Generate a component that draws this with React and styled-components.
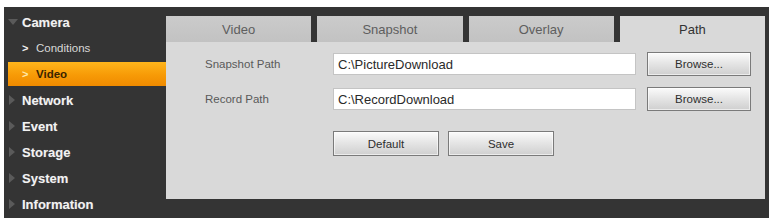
import React from "react";
import styled, { createGlobalStyle } from "styled-components";

const Global = createGlobalStyle`
  html, body { margin: 0; padding: 0; background: #fff; }
  body { font-family: "Liberation Sans", Arial, sans-serif; }
`;

// outer dark frame
const Frame = styled.div`
  margin: 7px 4px 0 4px;
  height: 211px;
  background: #343434;
  display: flex;
  overflow: hidden;
`;

// left menu
const Sidebar = styled.nav`
  width: 162px;
  padding-top: 2px;
  display: flex;
  flex-direction: column;
`;

const MenuItem = styled.div`
  height: 26px;
  display: flex;
  align-items: center;
  padding-left: 4px;
  color: #f2f2f2;
  font-weight: bold;
  font-size: 13px;
  text-shadow: 0 0 1px rgba(255, 255, 255, 0.3);
`;

const Arrow = styled.span`
  width: 0;
  height: 0;
  ${(p) =>
    p.$open
      ? `border-left: 5px solid transparent; border-right: 5px solid transparent; border-top: 6px solid #5a5a5a; margin-right: 4px;`
      : `border-top: 5px solid transparent; border-bottom: 5px solid transparent; border-left: 6px solid #5a5a5a; margin-left: 1px; margin-right: 7px;`}
`;

const SubItem = styled.div`
  height: ${(p) => (p.$active ? "24px" : "26px")};
  margin: ${(p) => (p.$active ? "1px 0" : "0")};
  margin-left: 4px;
  display: flex;
  align-items: center;
  padding-left: 14px;
  font-size: 11.5px;
  color: ${(p) => (p.$active ? "#3a2400" : "#d8d8d8")};
  font-weight: ${(p) => (p.$active ? "bold" : "normal")};
  background: ${(p) =>
    p.$active ? "linear-gradient(#ffb51c, #f79a06 55%, #ef8a00)" : "transparent"};
`;

const Chevron = styled.span`
  width: 14px;
  font-weight: bold;
  font-size: 11px;
  color: ${(p) => (p.$active ? "#ffe9a8" : "#f0f0f0")};
`;

// right side
const Main = styled.section`
  width: 599px;
  padding-top: 9px;
  display: flex;
  flex-direction: column;
`;

const TabBar = styled.div`
  display: flex;
  gap: 6px;
  height: 26px;
`;

const Tab = styled.div`
  flex: 1;
  display: flex;
  align-items: center;
  justify-content: center;
  font-size: 13px;
  color: ${(p) => (p.$active ? "#333" : "#5e5e5e")};
  background: ${(p) => (p.$active ? "#d9d9d9" : "linear-gradient(#cbcbcb, #c2c2c2)")};
`;

const Content = styled.div`
  height: 147px;
  background: #d9d9d9;
  padding: 10px 0 0 0;
  display: flex;
  flex-direction: column;
  gap: 11px;
`;

const Row = styled.div`
  display: flex;
  align-items: center;
  height: 24px;
`;

const Label = styled.div`
  width: 128px;
  padding-left: 39px;
  font-size: 11.5px;
  color: #5a5a5a;
`;

const Field = styled.div`
  width: 297px;
  height: 20px;
  background: #fff;
  border: 1px solid #c4c4c4;
  display: flex;
  align-items: center;
  padding-left: 4px;
  box-sizing: content-box;
  font-size: 13px;
  color: #2a2a2a;
`;

const Button = styled.button`
  width: ${(p) => p.$w || 104}px;
  height: ${(p) => p.$h || 24}px;
  margin-left: ${(p) => p.$ml || 0}px;
  border: 1px solid #7a7a7a;
  background: linear-gradient(#fbfbfb, #e6e6e6 45%, #cfcfcf);
  font-family: "Liberation Sans", Arial, sans-serif;
  font-size: 11.5px;
  color: #2e2e2e;
  padding: 0;
  box-shadow: inset 0 0 0 1px rgba(255, 255, 255, 0.6);
`;

const Actions = styled.div`
  display: flex;
  padding-left: 167px;
  margin-top: 9px;
  gap: 9px;
`;

const Right = styled.div`
  width: 4px;
`;

const subs = [
  { name: "Conditions" },
  { name: "Video", active: true },
];
const menus = ["Network", "Event", "Storage", "System", "Information"];
const tabs = ["Video", "Snapshot", "Overlay", "Path"];

export default function App() {
  return (
    <>
      <Global />
      <Frame>
        <Sidebar>
          <MenuItem>
            <Arrow $open />
            Camera
          </MenuItem>
          {subs.map((s) => (
            <SubItem key={s.name} $active={s.active}>
              <Chevron $active={s.active}>&gt;</Chevron>
              {s.name}
            </SubItem>
          ))}
          {menus.map((m) => (
            <MenuItem key={m}>
              <Arrow />
              {m}
            </MenuItem>
          ))}
        </Sidebar>
        <Main>
          <TabBar>
            {tabs.map((t) => (
              <Tab key={t} $active={t === "Path"}>
                {t}
              </Tab>
            ))}
          </TabBar>
          <Content>
            <Row>
              <Label>Snapshot Path</Label>
              <Field>C:\PictureDownload</Field>
              <Button $ml={11}>Browse...</Button>
            </Row>
            <Row>
              <Label>Record Path</Label>
              <Field>C:\RecordDownload</Field>
              <Button $ml={11}>Browse...</Button>
            </Row>
            <Actions>
              <Button $w={106} $h={25}>Default</Button>
              <Button $w={106} $h={25}>Save</Button>
            </Actions>
          </Content>
        </Main>
        <Right />
      </Frame>
    </>
  );
}
